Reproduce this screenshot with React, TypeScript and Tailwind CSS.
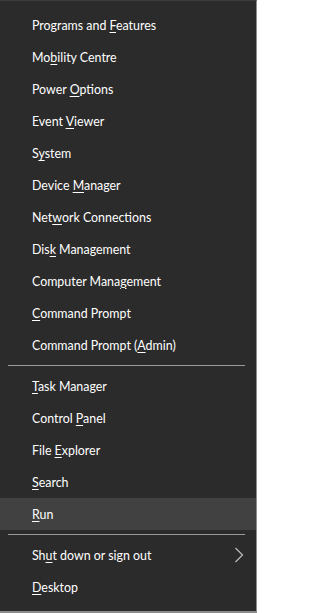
import React from "react";

type Item = { pre: string; key: string; post: string; active?: boolean; sub?: boolean };

const groups: Item[][] = [
  [
    { pre: "Programs and ", key: "F", post: "eatures" },
    { pre: "Mo", key: "b", post: "ility Centre" },
    { pre: "Power ", key: "O", post: "ptions" },
    { pre: "Event ", key: "V", post: "iewer" },
    { pre: "S", key: "y", post: "stem" },
    { pre: "Device ", key: "M", post: "anager" },
    { pre: "Net", key: "w", post: "ork Connections" },
    { pre: "Dis", key: "k", post: " Management" },
    { pre: "Computer Mana", key: "g", post: "ement" },
    { pre: "", key: "C", post: "ommand Prompt" },
    { pre: "Command Prompt (", key: "A", post: "dmin)" },
  ],
  [
    { pre: "", key: "T", post: "ask Manager" },
    { pre: "Control ", key: "P", post: "anel" },
    { pre: "File ", key: "E", post: "xplorer" },
    { pre: "", key: "S", post: "earch" },
    { pre: "", key: "R", post: "un", active: true },
  ],
  [
    { pre: "Sh", key: "u", post: "t down or sign out", sub: true },
    { pre: "", key: "D", post: "esktop" },
  ],
];

const Row = ({ item }: { item: Item }) => (
  <div
    className={`flex h-8 items-center justify-between pl-8 pr-3 ${
      item.active ? "bg-[#414141]" : ""
    }`}
  >
    <span className="translate-y-px">
      {item.pre}
      <u className="underline-offset-2">{item.key}</u>
      {item.post}
    </span>
    {item.sub && (
      <svg width="10" height="16" viewBox="0 0 10 16">
        <path d="M1.5 1 L8.5 8 L1.5 15" fill="none" stroke="#bdbdbd" strokeWidth="1.2" />
      </svg>
    )}
  </div>
);

export default function App() {
  return (
    <div
      className="flex h-[613px] w-[257px] flex-col border-t border-r border-b-2 border-t-[#3c3c3c] border-r-[#8c8c8c] border-b-[#8c8c8c] bg-[#2b2b2b] pt-2 text-[12.4px] text-white"
      style={{ fontFamily: '"Segoe UI", Lato, "Noto Sans", sans-serif' }}
    >
      {groups.map((g, i) => (
        <React.Fragment key={i}>
          {i > 0 && <div className="mx-2 my-1 h-px w-[237px] bg-[#9a9a9a]" />}
          {g.map((item, j) => (
            <Row key={j} item={item} />
          ))}
        </React.Fragment>
      ))}
    </div>
  );
}
